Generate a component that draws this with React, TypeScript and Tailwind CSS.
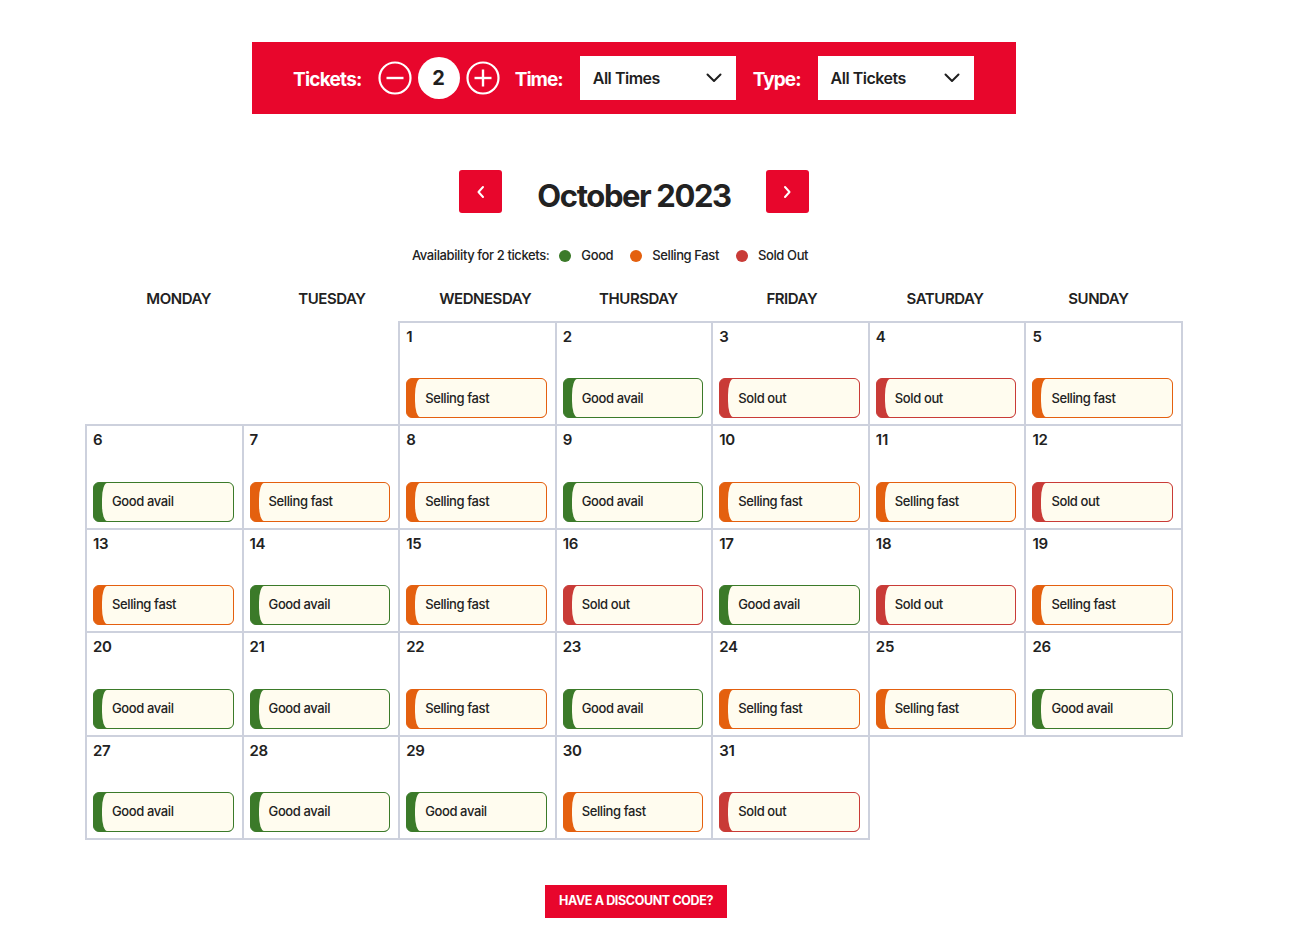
import React from "react";

type S = "G" | "S" | "X";

const statuses: S[] = [
  "S","G","X","X","S",
  "G","S","S","G","S","S","X",
  "S","G","S","X","G","X","S",
  "G","G","S","G","S","S","G",
  "G","G","G","S","X",
];

const badgeStyle: Record<S, { cls: string; label: string }> = {
  G: { cls: "border-[#3b7a29] bg-[#3b7a29]", label: "Good avail" },
  S: { cls: "border-[#e4600f] bg-[#e4600f]", label: "Selling fast" },
  X: { cls: "border-[#c93b37] bg-[#c93b37]", label: "Sold out" },
};

const days = ["MONDAY","TUESDAY","WEDNESDAY","THURSDAY","FRIDAY","SATURDAY","SUNDAY"];

function Chevron() {
  return (
    <svg width="16" height="10" viewBox="0 0 16 10" fill="none">
      <path d="M1.5 1.5 L8 8 L14.5 1.5" stroke="#1f1f1f" strokeWidth="2" strokeLinecap="round" strokeLinejoin="round" />
    </svg>
  );
}

function CircleBtn({ plus }: { plus?: boolean }) {
  return (
    <svg width="34" height="34" viewBox="0 0 34 34" fill="none">
      <circle cx="17" cy="17" r="15.5" stroke="white" strokeWidth="2.2" />
      <path d="M8.5 17 H25.5" stroke="white" strokeWidth="2.4" />
      {plus && <path d="M17 8.5 V25.5" stroke="white" strokeWidth="2.4" />}
    </svg>
  );
}

export default function App() {
  const cells: (number | null)[] = [null, null];
  for (let i = 1; i <= 31; i++) cells.push(i);

  return (
    <div
      className="min-h-[948px] w-[1302px] bg-white text-[#1f1f1f]"
      style={{ fontFamily: "Inter, 'Liberation Sans', sans-serif" }}
    >
      <div className="ml-[86px] w-[1096px] pt-[42px] flex flex-col items-center">
        {/* Header bar */}
        <div className="w-[764px] h-[72px] bg-[#e8062c] flex items-center pl-[41px] pr-[42px]">
          <span className="text-white text-[19px] font-bold tracking-[-0.04em] mt-[5px]">Tickets:</span>
          <div className="ml-[16px] flex items-center gap-[6px]">
            <CircleBtn />
            <div className="w-[42px] h-[42px] rounded-full bg-white flex items-center justify-center text-[20px] font-bold text-[#1f1f1f]">2</div>
            <CircleBtn plus />
          </div>
          <span className="ml-[15px] text-white text-[19px] font-bold tracking-[-0.05em] mt-[5px]">Time:</span>
          <div className="ml-[17px] shrink-0 w-[156px] h-[44px] bg-white flex items-center justify-between pl-[13px] pr-[14px]">
            <span className="text-[16px] font-semibold tracking-[-0.03em]">All Times</span>
            <Chevron />
          </div>
          <span className="ml-[17px] text-white text-[19px] font-bold tracking-[-0.05em] mt-[5px]">Type:</span>
          <div className="ml-[17px] shrink-0 w-[156px] h-[44px] bg-white flex items-center justify-between pl-[13px] pr-[14px]">
            <span className="text-[16px] font-semibold tracking-[-0.03em]">All Tickets</span>
            <Chevron />
          </div>
        </div>

        {/* Month nav */}
        <div className="mt-[56px] flex items-center">
          <button className="w-[43px] h-[43px] rounded-[3px] bg-[#e8062c] flex items-center justify-center">
            <svg width="10" height="14" viewBox="0 0 10 14" fill="none">
              <path d="M7 2 L2.5 7 L7 12" stroke="white" strokeWidth="2" strokeLinecap="round" strokeLinejoin="round" />
            </svg>
          </button>
          <h1 className="mx-[35px] text-[31px] font-bold tracking-[-0.045em] text-[#222] leading-none mt-[8px]">October 2023</h1>
          <button className="w-[43px] h-[43px] rounded-[3px] bg-[#e8062c] flex items-center justify-center">
            <svg width="10" height="14" viewBox="0 0 10 14" fill="none">
              <path d="M3 2 L7.5 7 L3 12" stroke="white" strokeWidth="2" strokeLinecap="round" strokeLinejoin="round" />
            </svg>
          </button>
        </div>

        {/* Legend */}
        <div className="mt-[33px] mr-[48px] flex items-center text-[13px] font-medium tracking-[-0.03em] text-[#222]">
          <span>Availability for 2 tickets:</span>
          <span className="ml-[10px] w-[12px] h-[12px] rounded-full bg-[#3b7a29]" />
          <span className="ml-[10px]">Good</span>
          <span className="ml-[17px] w-[12px] h-[12px] rounded-full bg-[#e4600f]" />
          <span className="ml-[10px]">Selling Fast</span>
          <span className="ml-[17px] w-[12px] h-[12px] rounded-full bg-[#c93b37]" />
          <span className="ml-[10px]">Sold Out</span>
        </div>

        {/* Day headers */}
        <div className="mt-[22px] self-start ml-[16px] w-[1073px] grid grid-cols-7">
          {days.map((d) => (
            <div key={d} className="text-center text-[15px] font-semibold tracking-[-0.03em] text-[#222]">{d}</div>
          ))}
        </div>

        {/* Calendar grid */}
        <div className="mt-[12px] w-full grid grid-cols-7">
          {cells.map((n, i) =>
            n === null ? (
              <div key={"e" + i} className="h-[103.4px]" />
            ) : (
              <div
                key={n}
                className="h-[103.4px] outline-2 outline-[#cdd1dd] -outline-offset-1 flex flex-col justify-between pt-[5px] pb-[7px] pl-[7px] pr-[9px]"
              >
                <span className="text-[15px] font-semibold leading-[20px] tracking-[-0.02em] text-[#222]">{n}</span>
                <div
                  className={
                    "h-[40px] rounded-[6px] border-[1.5px] flex overflow-hidden " +
                    badgeStyle[statuses[n - 1]].cls
                  }
                >
                  <div className="w-[8px] shrink-0" />
                  <div className="flex-1 bg-[#fffcef] rounded-l-[5px_16px] flex items-center pl-[10px] text-[13px] font-medium tracking-[-0.03em] text-[#222]">
                    {badgeStyle[statuses[n - 1]].label}
                  </div>
                </div>
              </div>
            )
          )}
        </div>

        {/* Discount */}
        <button className="mt-[46px] ml-[4px] w-[182px] h-[33px] bg-[#e8062c] text-white text-[12.5px] font-bold tracking-[-0.03em] uppercase">
          Have a discount code?
        </button>
      </div>
    </div>
  );
}
